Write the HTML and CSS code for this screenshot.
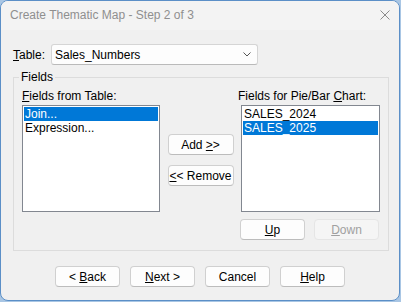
FILE: index.html
```html
<!DOCTYPE html>
<html lang="en">
<head>
    <meta charset="UTF-8">
    <meta name="viewport" content="width=device-width, initial-scale=1.0">
    <title>Create Thematic Map - Step 2 of 3</title>
    <link rel="stylesheet" href="styles.css">
</head>
<body>
    <div class="window">
        <!-- title bar -->
        <div class="titlebar">
            <span class="title">Create Thematic Map - Step 2 of 3</span>
            <svg class="close" width="10" height="10" viewBox="0 0 10 10">
                <path d="M0.5 0.5 L9.5 9.5 M9.5 0.5 L0.5 9.5" stroke="#8a8a8a" stroke-width="1" fill="none"/>
            </svg>
        </div>

        <div class="content">
            <div class="table-row">
                <label class="table-label"><u>T</u>able:</label>
                <div class="combo">
                    <span>Sales_Numbers</span>
                    <svg width="8" height="5" viewBox="0 0 8 5">
                        <path d="M0.5 0.5 L4 4 L7.5 0.5" stroke="#555" stroke-width="1" fill="none"/>
                    </svg>
                </div>
            </div>

            <fieldset class="group">
                <legend>Fields</legend>
                <div class="columns">
                    <div class="col">
                        <div class="col-label"><u>F</u>ields from Table:</div>
                        <div class="listbox">
                            <div class="item selected">Join...</div>
                            <div class="item">Expression...</div>
                        </div>
                    </div>

                    <div class="middle">
                        <button class="btn wide">Add <u>&gt;</u>&gt;</button>
                        <button class="btn wide"><u>&lt;</u>&lt; Remove</button>
                    </div>

                    <div class="col">
                        <div class="col-label right">Fields for Pie/Bar <u>C</u>hart:</div>
                        <div class="listbox">
                            <div class="item">SALES_2024</div>
                            <div class="item selected">SALES_2025</div>
                        </div>
                    </div>
                </div>

                <div class="order-row">
                    <button class="btn"><u>U</u>p</button>
                    <button class="btn" disabled><u>D</u>own</button>
                </div>
            </fieldset>

            <div class="footer">
                <button class="btn">&lt; <u>B</u>ack</button>
                <button class="btn"><u>N</u>ext &gt;</button>
                <button class="btn">Cancel</button>
                <button class="btn"><u>H</u>elp</button>
            </div>
        </div>
    </div>
</body>
</html>
```

FILE: styles.css
```css
body {
    margin: 0;
    padding: 0;
    width: 401px;
    height: 302px;
    background-color: #a9c6e4;
    font-family: "Liberation Sans", Arial, sans-serif;
    font-size: 12px;
    color: #000000;
}

.window {
    width: 400px;
    height: 301px;
    box-sizing: border-box;
    border: 1px solid #5b8fc7;
    border-radius: 8px;
    overflow: hidden;
    background-color: #f0f0f0;
    display: flex;
    flex-direction: column;
}

.titlebar {
    height: 29px;
    background-color: #f3f3f3;
    display: flex;
    align-items: center;
    justify-content: space-between;
    padding: 0 9px 0 9px;
}

.title {
    color: #8f8f8f;
    margin-top: -2px;
}

.close {
    margin-top: -2px;
}

.content {
    flex: 1;
    padding: 14px 0 0 12px;
}

.table-row {
    display: flex;
    align-items: center;
    height: 21px;
}

.table-label {
    width: 38px;
}

.combo {
    width: 207px;
    height: 21px;
    box-sizing: border-box;
    background-color: #fdfdfd;
    border: 1px solid #d5d5d5;
    border-bottom-color: #bababa;
    border-radius: 3px;
    display: flex;
    align-items: center;
    justify-content: space-between;
    padding: 0 6px 0 3px;
}

.group {
    margin: 5px 0 0 0;
    width: 376px;
    box-sizing: border-box;
    height: 181px;
    border: 1px solid #dcdcdc;
    padding: 0 8px 0 8px;
    min-width: 0;
}

.group legend {
    padding: 0 2px;
    margin-left: -3px;
}

.columns {
    display: grid;
    grid-template-columns: 138px 1fr 139px;
    margin-top: 5px;
}

.col-label {
    height: 16px;
}

.col-label.right {
    margin-left: -3px;
}

.listbox {
    height: 107px;
    box-sizing: border-box;
    border: 1px solid #828790;
    background-color: #ffffff;
    padding: 1px;
}

.item {
    height: 14px;
    line-height: 14px;
    padding-left: 1px;
}

.item.selected {
    background-color: #0078d7;
    color: #ffffff;
}

.middle {
    display: flex;
    flex-direction: column;
    align-items: center;
    gap: 10px;
    padding-top: 45px;
}

.btn {
    width: 65px;
    height: 21px;
    box-sizing: border-box;
    font-family: inherit;
    font-size: 12px;
    color: #000000;
    background-color: #fdfdfd;
    border: 1px solid #d0d0d0;
    border-bottom-color: #bcbcbc;
    border-radius: 4px;
    padding: 0;
    line-height: 18px;
}

.btn.wide {
    width: 66px;
}

.btn:disabled {
    background-color: #f5f5f5;
    border-color: #e5e5e5;
    color: #a0a0a0;
}

.order-row {
    display: flex;
    justify-content: flex-end;
    gap: 9px;
    margin-top: 7px;
    margin-right: 1px;
}

.footer {
    display: flex;
    justify-content: center;
    gap: 10px;
    margin-top: 15px;
    margin-right: 12px;
}
```
